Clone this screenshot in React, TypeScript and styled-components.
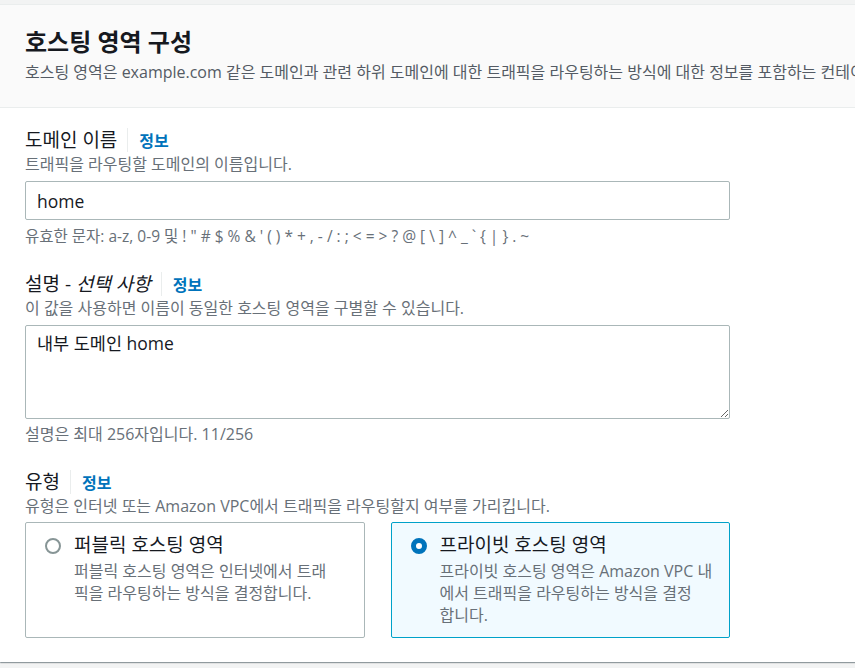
import React, { useState } from 'react';
import styled, { createGlobalStyle } from 'styled-components';

const GlobalStyle = createGlobalStyle`
    html, body {
        margin: 0;
        padding: 0;
        background: #f2f3f3;
        overflow: hidden;
    }

    body {
        font-family: "Open Sans", "Noto Sans CJK KR", sans-serif;
        color: #16191f;
    }
`;

const Page = styled.div`
    padding-top: 4px;
    height: 668px;
    box-sizing: border-box;
`;

const Panel = styled.div`
    background: #ffffff;
    border-top: 1px solid #eaeded;
    box-shadow: 0 1px 1px 0 rgba(0, 28, 36, 0.3), 1px 1px 1px 0 rgba(0, 28, 36, 0.15);
    width: 1000px;
`;

const Header = styled.div`
    background: #fafafa;
    padding: 23px 25px 24px;
    border-bottom: 1px solid #eaeded;
`;

const Title = styled.h2`
    margin: 0;
    font-size: 24px;
    line-height: 28px;
    font-weight: 700;
    color: #16191f;
`;

const Subtitle = styled.p`
    margin: 5px 0 0;
    font-size: 16px;
    line-height: 22px;
    color: #545b64;
    white-space: nowrap;
`;

const Body = styled.div`
    padding: 20px 25px 24px;
`;

const Form = styled.div`
    width: 705px;
    display: flex;
    flex-direction: column;
`;

const Field = styled.div<{ $first?: boolean }>`
    margin-top: ${({ $first }) => ($first ? '0' : '25px')};
`;

const LabelRow = styled.div`
    display: flex;
    align-items: center;
    height: 24px;
`;

const Label = styled.label`
    font-size: 19px;
    line-height: 24px;
    padding-right: 10px;
    border-right: 1px solid #eaeded;
    color: #16191f;

    em {
        font-style: italic;
    }
`;

const InfoLink = styled.a`
    padding-left: 11px;
    font-size: 16px;
    font-weight: 700;
    color: #0073bb;
    text-decoration: none;
    cursor: pointer;
`;

const Hint = styled.div`
    margin-top: 1px;
    font-size: 16px;
    line-height: 22px;
    color: #687078;
`;

const Constraint = styled.div<{ $gap?: number; $size?: number }>`
    margin-top: ${({ $gap }) => $gap ?? 5}px;
    font-size: ${({ $size }) => $size ?? 16}px;
    line-height: 22px;
    color: #687078;
`;

const TextInput = styled.input`
    display: block;
    width: 100%;
    height: 39px;
    margin-top: 6px;
    box-sizing: border-box;
    padding: 0 11px;
    border: 1px solid #aab7b8;
    border-radius: 2px;
    font-family: inherit;
    font-size: 17.5px;
    color: #16191f;
    background: #ffffff;
    outline: none;
`;

const TextArea = styled.textarea`
    display: block;
    width: 100%;
    height: 94px;
    margin-top: 6px;
    box-sizing: border-box;
    padding: 5px 11px;
    border: 1px solid #aab7b8;
    border-radius: 2px;
    font-family: inherit;
    font-size: 17.5px;
    line-height: 24px;
    color: #16191f;
    background: #ffffff;
    resize: vertical;
    outline: none;
`;

const Tiles = styled.div`
    display: grid;
    grid-template-columns: 1fr 1fr;
    column-gap: 26px;
    margin-top: 5px;
`;

const Tile = styled.div<{ $selected?: boolean }>`
    display: flex;
    gap: 13px;
    padding: 10px 15px 11px 19px;
    border: 1px solid ${({ $selected }) => ($selected ? '#00a1c9' : '#aab7b8')};
    border-radius: 2px;
    background: ${({ $selected }) => ($selected ? '#f1faff' : '#ffffff')};
    cursor: pointer;
`;

const Radio = styled.span<{ $checked?: boolean }>`
    flex: 0 0 auto;
    width: 16px;
    height: 16px;
    margin-top: 5px;
    box-sizing: border-box;
    border-radius: 50%;
    border: ${({ $checked }) => ($checked ? '5px solid #0073bb' : '2px solid #879596')};
    background: #ffffff;
`;

const TileText = styled.div`
    display: flex;
    flex-direction: column;
`;

const TileTitle = styled.div`
    font-size: 19px;
    line-height: 24px;
    color: #16191f;
`;

const TileDesc = styled.div`
    margin-top: 3px;
    font-size: 16px;
    line-height: 22px;
    color: #687078;
    white-space: nowrap;
`;

const VALID_CHARS = '유효한 문자: a-z, 0-9 및 ! " # $ % & \' ( ) * + , - / : ; < = > ? @ [ \\ ] ^ _ ` { | } . ~';

const ZONE_TYPES = [
    {
        key: 'public',
        title: '퍼블릭 호스팅 영역',
        lines: ['퍼블릭 호스팅 영역은 인터넷에서 트래', '픽을 라우팅하는 방식을 결정합니다.'],
    },
    {
        key: 'private',
        title: '프라이빗 호스팅 영역',
        lines: ['프라이빗 호스팅 영역은 Amazon VPC 내', '에서 트래픽을 라우팅하는 방식을 결정', '합니다.'],
    },
];

export default function App() {
    const [name, setName] = useState('home');
    const [desc, setDesc] = useState('내부 도메인 home');
    const [zoneType, setZoneType] = useState('private');

    return (
      <>
        <GlobalStyle />
        <Page>
          <Panel>
            <Header>
              <Title>호스팅 영역 구성</Title>
              <Subtitle>
                호스팅 영역은 example.com 같은 도메인과 관련 하위 도메인에 대한 트래픽을 라우팅하는 방식에 대한 정보를 포함하는 컨테이너입니다.
              </Subtitle>
            </Header>
            <Body>
              <Form>
                <Field $first>
                  <LabelRow>
                    <Label>도메인 이름</Label>
                    <InfoLink>정보</InfoLink>
                  </LabelRow>
                  <Hint>트래픽을 라우팅할 도메인의 이름입니다.</Hint>
                  <TextInput value={name} onChange={e => setName(e.target.value)} />
                  <Constraint $size={15.5}>{VALID_CHARS}</Constraint>
                </Field>
                <Field>
                  <LabelRow>
                    <Label>설명 - <em>선택 사항</em></Label>
                    <InfoLink>정보</InfoLink>
                  </LabelRow>
                  <Hint>이 값을 사용하면 이름이 동일한 호스팅 영역을 구별할 수 있습니다.</Hint>
                  <TextArea value={desc} onChange={e => setDesc(e.target.value)} />
                  <Constraint $gap={4}>설명은 최대 256자입니다. {desc.length}/256</Constraint>
                </Field>
                <Field>
                  <LabelRow>
                    <Label>유형</Label>
                    <InfoLink>정보</InfoLink>
                  </LabelRow>
                  <Hint>유형은 인터넷 또는 Amazon VPC에서 트래픽을 라우팅할지 여부를 가리킵니다.</Hint>
                  <Tiles>
                    {ZONE_TYPES.map(z => (
                      <Tile key={z.key} $selected={zoneType === z.key} onClick={() => setZoneType(z.key)}>
                        <Radio $checked={zoneType === z.key} />
                        <TileText>
                          <TileTitle>{z.title}</TileTitle>
                          <TileDesc>
                            {z.lines.map((line, i) => (
                              <React.Fragment key={i}>
                                {i > 0 && <br />}
                                {line}
                              </React.Fragment>
                            ))}
                          </TileDesc>
                        </TileText>
                      </Tile>
                    ))}
                  </Tiles>
                </Field>
              </Form>
            </Body>
          </Panel>
        </Page>
      </>
    )
}
